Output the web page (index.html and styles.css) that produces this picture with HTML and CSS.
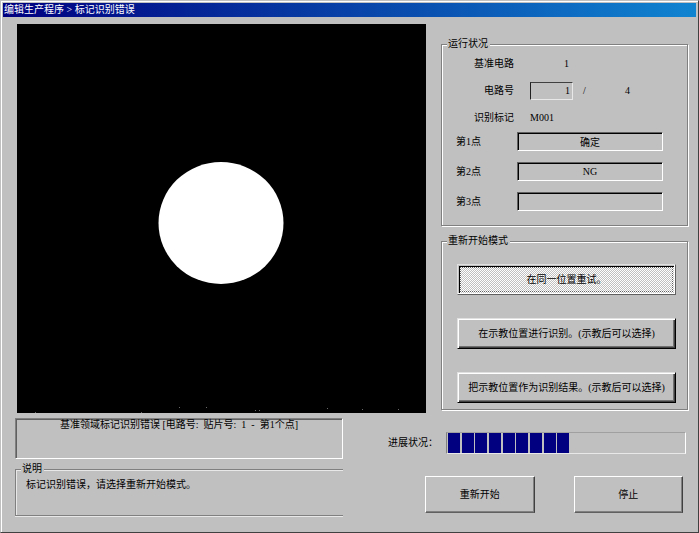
FILE: index.html
```html
<!DOCTYPE html>
<html lang="zh-CN">
<head>
<meta charset="utf-8">
<title>编辑生产程序</title>
<link rel="stylesheet" href="styles.css">
</head>
<body>
<div class="window">
  <h1 class="titlebar">编辑生产程序 &gt; 标记识别错误</h1>
  <main class="content">
    <div class="upper">
      <svg class="camera" viewBox="0 0 409 389" aria-hidden="true">
        <rect width="409" height="389" fill="#000"/>
        <ellipse cx="204" cy="199" rx="62.5" ry="61" fill="#fff"/>
        <g fill="#666">
          <rect x="18" y="388" width="1" height="1"/>
          <rect x="124" y="388" width="1" height="1"/>
          <rect x="162" y="383" width="1" height="1"/>
          <rect x="189" y="383" width="1" height="1"/>
          <rect x="238" y="386" width="1" height="1"/>
          <rect x="242" y="386" width="1" height="1"/>
          <rect x="310" y="384" width="1" height="1"/>
          <rect x="345" y="385" width="1" height="1"/>
          <rect x="381" y="385" width="1" height="1"/>
        </g>
      </svg>
      <div class="side">
        <fieldset class="group status">
          <legend>运行状况</legend>
          <div class="facts">
            <span class="name">基准电路</span><span class="num">1</span>
            <label class="name" for="circuit">电路号</label><input class="circuit" id="circuit" value="1" readonly><span class="slash">/</span><span class="total">4</span>
            <span class="name">识别标记</span><span class="mark">M001</span>
          </div>
          <div class="points">
            <label for="p1">第1点</label><input class="point" id="p1" value="确定" readonly>
            <label for="p2">第2点</label><input class="point" id="p2" value="NG" readonly>
            <label for="p3">第3点</label><input class="point" id="p3" value="" readonly>
          </div>
        </fieldset>
        <fieldset class="group modes">
          <legend>重新开始模式</legend>
          <div class="choices">
            <button class="choice pressed" type="button" aria-pressed="true">在同一位置重试。</button>
            <button class="choice" type="button" aria-pressed="false">在示教位置进行识别。(示教后可以选择)</button>
            <button class="choice" type="button" aria-pressed="false">把示教位置作为识别结果。(示教后可以选择)</button>
          </div>
        </fieldset>
      </div>
    </div>
    <div class="lower">
      <div class="notes">
        <p class="message">基准领域标记识别错误 [电路号:&nbsp; 贴片号:&nbsp; 1&nbsp; -&nbsp; 第1个点]</p>
        <fieldset class="group help">
          <legend>说明</legend>
          <p>标记识别错误，请选择重新开始模式。</p>
        </fieldset>
      </div>
      <div class="actions">
        <div class="progress-row">
          <label for="progress">进展状况：</label>
          <progress class="progress" id="progress" value="52" max="100"></progress>
        </div>
        <div class="buttons">
          <button class="command" type="button">重新开始</button>
          <button class="command" type="button">停止</button>
        </div>
      </div>
    </div>
  </main>
</div>
</body>
</html>
```
FILE: styles.css
```css
* {
  box-sizing: border-box;
}

body {
  margin: 0;
  background: #c0c0c0;
  color: #000;
  font: 10px/12px "Liberation Serif", "Noto Sans CJK SC", serif;
}

button,
input {
  margin: 0;
  padding: 0;
  border-radius: 0;
  background: #c0c0c0;
  color: inherit;
  font: inherit;
}

p {
  margin: 0;
}

.window {
  min-height: 100vh;
  padding: 2px;
  border: 1px solid;
  border-color: #c0c0c0 #404040 #404040 #c0c0c0;
  box-shadow: inset 1px 1px #fff;
}

.titlebar {
  margin: 0;
  padding: 0 1px;
  background: linear-gradient(90deg, #000080, #1084d0);
  color: #fff;
  font-size: 10px;
  font-weight: 400;
  line-height: 14px;
}

.content {
  padding: 7px 8px 0 12px;
}

.upper {
  display: grid;
  grid-template-columns: 409fr 247fr;
  gap: 15px;
  margin-left: 2px;
}

.camera {
  display: block;
  width: 100%;
}

.side {
  display: flex;
  flex-direction: column;
  gap: 9px;
  padding-top: 14px;
}

.group {
  min-width: 0;
  margin: 0;
  padding: 0;
  border: 1px solid #808080;
  box-shadow: 1px 1px #fff, inset 1px 1px #fff;
}

.group legend {
  margin-left: 5px;
  padding: 0 2px 0 1px;
  background: #c0c0c0;
}

.status {
  padding-bottom: 14px;
}

.facts {
  display: grid;
  grid-template-columns: 72px 43px 16px 1fr;
  grid-auto-rows: 27px;
  align-items: center;
  column-gap: 16px;
}

.name {
  grid-column: 1;
  text-align: right;
}

.num {
  padding-right: 4px;
  text-align: right;
}

.circuit {
  width: 100%;
  height: 18px;
  padding-right: 2px;
  border: 1px solid;
  border-color: #404040 #e8e8e8 #e8e8e8 #202020;
  text-align: right;
}

.slash {
  margin-left: -6px;
}

.total {
  padding-left: 4px;
}

.points {
  display: grid;
  grid-template-columns: 61px 1fr;
  grid-auto-rows: 19px;
  align-items: center;
  row-gap: 11px;
  padding: 1px 24px 0 14px;
}

.point {
  width: 100%;
  height: 19px;
  border: 1px solid;
  border-color: #606060 #fff #fff #606060;
  box-shadow: inset 1px 1px #000;
  text-align: center;
}

.choices {
  display: flex;
  flex-direction: column;
  gap: 23px;
  padding: 17px 11px 6px 15px;
}

.choice {
  height: 31px;
  border: 1px solid;
  border-color: #e0e0e0 #000 #000 #e0e0e0;
  box-shadow: inset 1px 1px #fff, inset -1px -1px #404040, inset -2px -2px #707070;
}

.pressed {
  padding: 1px;
  border-color: #e0e0e0 #606060 #606060 #e0e0e0;
  outline: 1px dotted #606060;
  outline-offset: -4px;
  background: repeating-conic-gradient(#fff 0 25%, #c0c0c0 0 50%) 0 0 / 2px 2px;
  box-shadow: inset -1px -1px #fff, inset 1px 1px #c0c0c0, inset 2px 2px #000;
}

.lower {
  display: grid;
  grid-template-columns: 328fr 298fr;
  gap: 45px;
  padding: 5px 2px 0 0;
}

.message {
  height: 41px;
  margin-bottom: 4px;
  border: 1px solid;
  border-color: #808080 #fff #fff #808080;
  box-shadow: inset 1px 1px #606060;
  text-align: center;
}

.help {
  height: 53px;
  border-right: 0;
  box-shadow: 0 1px #e8e8e8, inset 1px 1px #e8e8e8;
}

.help p {
  padding: 4px 10px 0;
}

.actions {
  padding-top: 14px;
}

.progress-row {
  display: flex;
  align-items: center;
  gap: 8px;
}

.progress-row label {
  flex: none;
}

.progress {
  flex: 1;
  min-width: 0;
  height: 22px;
  padding: 0 1px;
  border: 1px solid;
  border-color: #a0a0a0 #fff #e8e8e8 #808080;
  background: #c0c0c0;
  appearance: none;
}

.progress::-webkit-progress-bar {
  background: #c0c0c0;
}

.progress::-webkit-progress-value {
  background: repeating-linear-gradient(90deg, #000080 0 12px, #c0c0c0 12px calc(100% / 9));
}

.buttons {
  display: grid;
  grid-template-columns: 1fr 1fr;
  gap: 39px;
  padding: 22px 3px 0 37px;
}

.command {
  height: 37px;
  border: 1px solid;
  border-color: #fff #404040 #606060 #fff;
  box-shadow: inset -1px -1px #808080;
}
```
